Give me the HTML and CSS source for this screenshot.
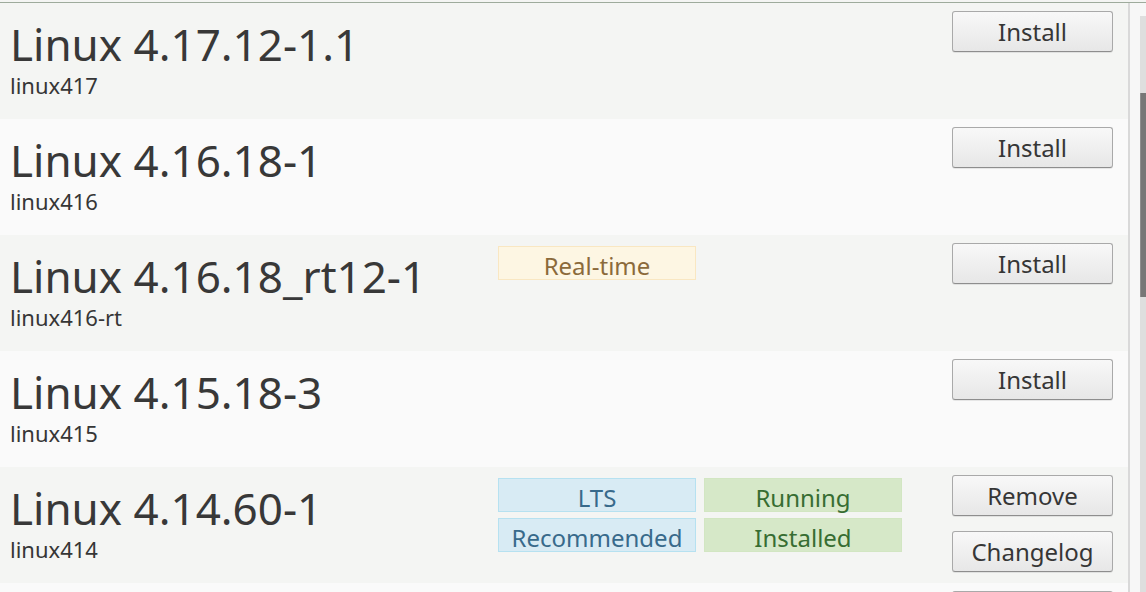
FILE: index.html
```html
<!DOCTYPE html>
<html lang="en">
<head>
<meta charset="utf-8">
<title>Kernels</title>
<link rel="stylesheet" href="styles.css">
</head>
<body>
<div class="window">
  <div class="topline"></div>
  <div class="main">
    <div class="list">
      <div class="row odd">
        <div class="info">
          <div class="title">Linux 4.17.12-1.1</div>
          <div class="pkg">linux417</div>
        </div>
        <div class="badges"></div>
        <div class="actions"><button class="btn">Install</button></div>
      </div>
      <div class="row even">
        <div class="info">
          <div class="title">Linux 4.16.18-1</div>
          <div class="pkg">linux416</div>
        </div>
        <div class="badges"></div>
        <div class="actions"><button class="btn">Install</button></div>
      </div>
      <div class="row odd">
        <div class="info">
          <div class="title">Linux 4.16.18_rt12-1</div>
          <div class="pkg">linux416-rt</div>
        </div>
        <div class="badges">
          <span class="badge rt">Real-time</span>
        </div>
        <div class="actions"><button class="btn">Install</button></div>
      </div>
      <div class="row even">
        <div class="info">
          <div class="title">Linux 4.15.18-3</div>
          <div class="pkg">linux415</div>
        </div>
        <div class="badges"></div>
        <div class="actions"><button class="btn">Install</button></div>
      </div>
      <div class="row odd">
        <div class="info">
          <div class="title">Linux 4.14.60-1</div>
          <div class="pkg">linux414</div>
        </div>
        <div class="badges">
          <span class="badge lts">LTS</span>
          <span class="badge ok">Running</span>
          <span class="badge lts">Recommended</span>
          <span class="badge ok">Installed</span>
        </div>
        <div class="actions">
          <button class="btn">Remove</button>
          <button class="btn">Changelog</button>
        </div>
      </div>
      <div class="row even">
        <div class="info"></div>
        <div class="badges"></div>
        <div class="actions"><button class="btn" aria-label="Install"></button></div>
      </div>
    </div>
    <div class="vsep"></div>
    <div class="scrollcol">
      <div class="scrolltop"></div>
      <div class="track"><div class="thumb"></div></div>
    </div>
  </div>
</div>
</body>
</html>
```
FILE: styles.css
```css
html, body {
  margin: 0;
  padding: 0;
  background: #f4f5f3;
}
body {
  font-family: "Noto Sans", "Open Sans", sans-serif;
  color: #353535;
  overflow: hidden;
}
.window {
  width: 1146px;
  height: 592px;
  overflow: hidden;
  padding-top: 2px;
  box-sizing: border-box;
  display: flex;
  flex-direction: column;
}
.topline {
  height: 1px;
  background: #9eab9c;
  flex: none;
}
.main {
  flex: 1;
  display: flex;
  min-height: 0;
}
.list {
  width: 1128px;
  flex: none;
  display: flex;
  flex-direction: column;
}
.row {
  height: 116px;
  flex: none;
  box-sizing: border-box;
  padding: 0 15px 0 10px;
  display: grid;
  grid-template-columns: 488px 404px 1fr;
  align-items: start;
}
.row.odd { background: #f4f5f3; }
.row.even { background: #fafafa; }
.info {
  padding-top: 13px;
}
.title {
  font-size: 44px;
  line-height: 56px;
  color: #383838;
  white-space: nowrap;
}
.pkg {
  font-size: 22px;
  line-height: 26px;
  color: #363636;
}
.badges {
  padding-top: 11px;
  display: grid;
  grid-template-columns: 198px 198px;
  column-gap: 8px;
  row-gap: 6px;
}
.badge {
  height: 34px;
  box-sizing: border-box;
  border: 1px solid;
  padding-top: 5px;
  font-size: 24px;
  line-height: 28px;
  text-align: center;
  white-space: nowrap;
}
.badge.rt {
  background: #fdf6e3;
  border-color: #f9e7c2;
  color: #8b6a3b;
}
.badge.lts {
  background: #d8ebf4;
  border-color: #b6e1f0;
  color: #386a8b;
}
.badge.ok {
  background: #d6e8c8;
  border-color: #d2e6c2;
  color: #376d32;
}
.actions {
  padding-top: 8px;
  display: flex;
  flex-direction: column;
  align-items: flex-end;
  gap: 15px;
}
.btn {
  width: 161px;
  height: 41px;
  box-sizing: border-box;
  margin: 0;
  padding: 1px 0 0 0;
  border: 1px solid #a9a9a9;
  border-bottom-color: #8e8e8e;
  border-radius: 3px;
  background: linear-gradient(#f8f8f8, #e7e7e7);
  box-shadow: 0 1px 0 rgba(0,0,0,0.08);
  font-family: "Noto Sans", "Open Sans", sans-serif;
  font-size: 24px;
  line-height: 36px;
  color: #363636;
  text-align: center;
}
.vsep {
  width: 2px;
  flex: none;
  background: #d9d9d9;
}
.scrollcol {
  width: 16px;
  flex: none;
  background: #f7f7f7;
  display: flex;
  flex-direction: column;
  align-items: flex-end;
}
.scrolltop {
  height: 13px;
  flex: none;
}
.track {
  width: 6px;
  flex: 1;
  background: #dedede;
}
.thumb {
  margin-top: 77px;
  height: 204px;
  background: #777777;
  border-left: 1px solid #8e8e8e;
  box-sizing: border-box;
}
```
